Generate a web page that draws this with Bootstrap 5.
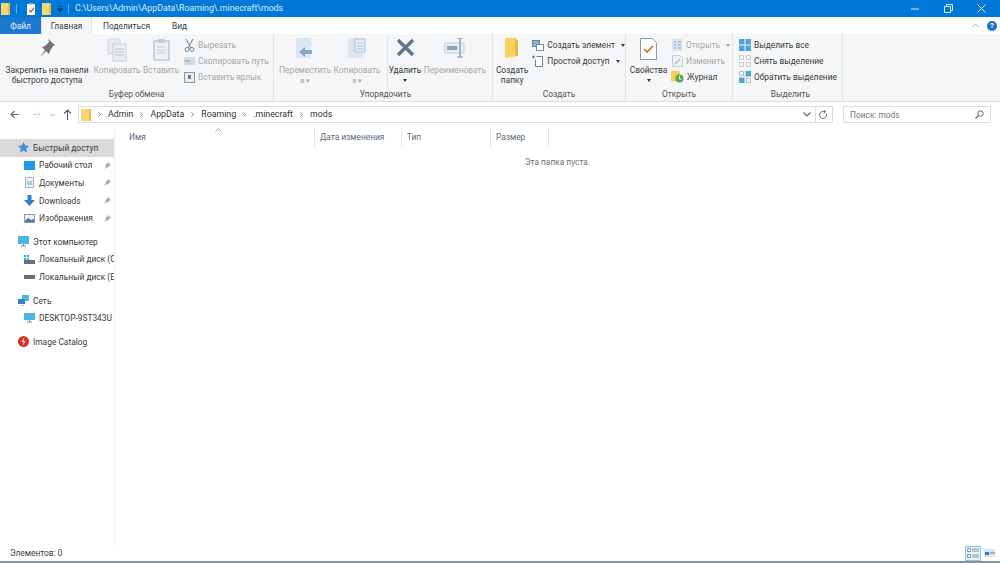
<!DOCTYPE html>
<html lang="ru">
<head>
<meta charset="UTF-8">
<title>mods</title>
<link href="https://cdn.jsdelivr.net/npm/bootstrap@5.3.3/dist/css/bootstrap.min.css" rel="stylesheet">
<style>
html,body{height:563px;overflow:hidden}
body{font-family:Roboto,"Open Sans","Liberation Sans",sans-serif;font-size:8.35px;color:#3a3a3a;background:#fff;line-height:1.2}
svg{display:block;flex:none}
.fe-app{height:563px}
.title-bar{height:17px;background:#0078d7;color:#dcecf9;font-size:8.8px;padding-left:1px}
.title-bar .path-txt{margin-left:6px}
.q-sep{width:1px;height:10px;background:#5fa8e3;margin:0 3px 0 6px}
.q-gap{margin-left:6px}
.q-sep2{margin:0 0 0 5px}
.win-btns{margin-left:auto;gap:24px;padding-right:14px}
.tab-row{height:17px;background:#fff}
.tab-file{width:41px;height:17px;background:#1b79cf;color:#e8f2fb}
.tab-item{height:17px;padding:0 11px}
.tab-item.is-on{width:51px;background:#f5f6f7;border-left:1px solid #e3e4e5;border-right:1px solid #e3e4e5;justify-content:center;padding:0}
.help-area{margin-left:auto;gap:8px;padding-right:3px}
.help-dot{width:10px;height:10px;border-radius:50%;background:#1475c9;color:#fff;font-size:8px;font-weight:700;line-height:10px;text-align:center}
.rib{height:68px;background:#f5f6f7;border-bottom:1px solid #dadbdc}
.rib-group{border-right:1px solid #e2e3e4;padding-top:3px}
.rib-body{height:51px}
.rib-cap{height:13px;text-align:center;color:#555;line-height:13px}
.big-btn{text-align:center;line-height:9.5px;white-space:nowrap}
.big-ico{height:26px;margin-top:1px;margin-bottom:2px}
.mut{color:#a6a8aa}
.sm-btn{height:16px;gap:3px;white-space:nowrap}
.caret-d{display:inline-block;border-left:2.5px solid transparent;border-right:2.5px solid transparent;border-top:3px solid currentColor;vertical-align:middle;margin-left:3px}
.caret-c{margin:0;color:#333}
.dark-txt{color:#333}
.in-txt{font-size:7px}
.gr-clip{width:274px}
.gr-org{width:219px;padding-left:5px}
.gr-new{width:133px}
.gr-open{width:107px}
.gr-sel{width:110px;padding-left:6px}
.b-pin{width:92px;padding-left:2px}
.b-copy{width:50px}
.b-paste{width:38px}
.b-move{width:52px}
.b-del{width:35px;margin-left:4px;border-left:1px solid #e2e3e4}
.b-ren{width:66px}
.b-folder{width:40px}
.b-prop{width:45px}
.s-new{margin-left:1px}
.s-open{margin-left:1px}
.j-ico{margin-left:-1px}
.addr-row{height:25px;background:#fff;padding-top:4px}
.addr-nav{width:78px;height:17px;padding-left:10px}
.nav-fwd{margin-left:13px}
.nav-drop{margin-left:9px}
.nav-up{margin-left:8px}
.addr-box{width:755px;height:17px;border:1px solid #dcdcdc;color:#333;font-size:8.8px;padding-left:2px}
.crumb-sep{margin:0 7px}
.addr-div{width:1px;height:15px;background:#dcdcdc;margin:0 3px 0 4px}
.srch-box{width:148px;height:17px;border:1px solid #dcdcdc;margin-left:10px;color:#777;padding:0 6px}
.main-area{height:418px}
.side-pane{width:116px;border-right:1px solid #f2f2f2;overflow:hidden;white-space:nowrap;padding-top:12px;font-size:8.4px}
.side-row{height:17.6px;padding-left:24px;gap:4px}
.side-row.is-top{padding-left:18px}
.side-row.is-sel{background:#d9d9d9}
.side-row .pin-ico{margin-left:auto;margin-right:3px}
.side-gap{height:6px}
.col-heads{color:#5a6a7c}
.col-h{height:20px;border-right:1px solid #e5e5e5;padding-left:5px}
.c-name{width:200px;padding-left:14px}
.c-date{width:87px}
.c-type{width:89px}
.c-size{width:58px}
.sort-up{height:0;padding-left:100px}
.sort-up svg{position:relative;top:1px}
.empty-msg{color:#6d6d6d;text-align:center;margin-top:10px;width:885px}
.stat-bar{height:16px;padding-left:10px}
.view-btns{margin-left:auto;gap:3px;padding-right:5px}
.view-on{width:16px;height:15px;border:1px solid #7ccbe8;background:#e3f3fa;padding:1px}
.bot-line{height:2px;background:#8a9298}
</style>
</head>
<body>
<div class="fe-app d-flex flex-column">

  <div class="title-bar d-flex align-items-center">
    <svg width="9" height="12" viewBox="0 0 9 12"><rect width="9" height="12" fill="#f7d774"/><rect x="7" width="2" height="12" fill="#e6bb45"/></svg>
    <div class="q-sep"></div>
    <svg class="q-gap" width="10" height="12" viewBox="0 0 10 12"><rect x="1" y="1" width="8" height="11" fill="#fff"/><rect x="3" width="4" height="2" fill="#c9b38a"/><path d="M3 7l2 2 3-4" stroke="#e2552d" fill="none" stroke-width="1.400"/></svg>
    <svg class="q-gap" width="9" height="12" viewBox="0 0 9 12"><rect width="9" height="12" fill="#f7d774"/><rect x="7" width="2" height="12" fill="#e6bb45"/></svg>
    <svg class="q-gap" width="6" height="6" viewBox="0 0 6 6"><path d="M.5 .5h5M0 2.500h6L3 6z" stroke="#1b3a57" fill="#1b3a57" stroke-width=".5"/></svg>
    <div class="q-sep q-sep2"></div>
    <span class="path-txt">C:\Users\Admin\AppData\Roaming\.minecraft\mods</span>
    <div class="win-btns d-flex align-items-center">
      <svg width="9" height="9" viewBox="0 0 9 9"><path d="M0 5h8" stroke="#dcecf9"/></svg>
      <svg width="9" height="9" viewBox="0 0 9 9"><path d="M.5 2.500h6v6h-6zM2.500 2.500v-2h6v6h-2" stroke="#dcecf9" fill="none"/></svg>
      <svg width="9" height="9" viewBox="0 0 9 9"><path d="M.5.500l8 8M8.500.500l-8 8" stroke="#dcecf9"/></svg>
    </div>
  </div>

  <div class="tab-row d-flex align-items-center">
    <div class="tab-file d-flex align-items-center justify-content-center">Файл</div>
    <div class="tab-item is-on d-flex align-items-center">Главная</div>
    <div class="tab-item d-flex align-items-center">Поделиться</div>
    <div class="tab-item d-flex align-items-center">Вид</div>
    <div class="help-area d-flex align-items-center">
      <svg width="7" height="5" viewBox="0 0 7 5"><path d="M.5 4l3-3 3 3" stroke="#a9abad" fill="none"/></svg>
      <div class="help-dot">?</div>
    </div>
  </div>

  <div class="rib d-flex">
    <div class="rib-group gr-clip d-flex flex-column">
      <div class="rib-body d-flex">
        <div class="big-btn b-pin">
          <div class="big-ico d-flex justify-content-center"><svg width="18" height="20" viewBox="0 0 18 20"><path d="M10 1l7 6-2 1-3 5-1 3-3-3-6 6 5-7-3-3 3-1 4-4z" fill="#6f7377"/></svg></div>
          Закрепить на панели<br>быстрого доступа
        </div>
        <div class="big-btn b-copy mut">
          <div class="big-ico d-flex justify-content-center"><svg width="20" height="24" viewBox="0 0 20 24"><rect x="1" y="1" width="12" height="15" fill="#e4eaf0" stroke="#d4dae0"/><rect x="6" y="6" width="13" height="17" fill="#e9eef3" stroke="#c6ced6"/><path d="M8 11h9M8 14h9M8 17h9" stroke="#b9c3cd"/></svg></div>
          Копировать
        </div>
        <div class="big-btn b-paste mut">
          <div class="big-ico d-flex justify-content-center"><svg width="17" height="23" viewBox="0 0 17 23"><rect x="1" y="3" width="15" height="19" fill="#eef1f4" stroke="#a9b3bd"/><rect x="5" y="1" width="7" height="4" fill="#c4ccd4"/><path d="M4 9h9M4 12h9M4 15h9" stroke="#c3cbd3"/></svg></div>
          Вставить
        </div>
        <div class="d-flex flex-column mut ms-1">
          <div class="sm-btn d-flex align-items-center"><svg width="11" height="13" viewBox="0 0 11 13"><path d="M2 0l5 9M9 0l-5 9" stroke="#7e95ab" stroke-width="1.200"/><circle cx="3" cy="10.500" r="2" fill="none" stroke="#6f8397"/><circle cx="8" cy="10.500" r="2" fill="none" stroke="#6f8397"/></svg>Вырезать</div>
          <div class="sm-btn d-flex align-items-center"><svg width="11" height="8" viewBox="0 0 11 8"><rect width="11" height="8" fill="#cfdbe7"/><path d="M1 4h5" stroke="#7f93a8"/></svg>Скопировать путь</div>
          <div class="sm-btn d-flex align-items-center"><svg width="11" height="12" viewBox="0 0 11 12"><rect x=".5" y="1.500" width="10" height="10" fill="#e8edf2" stroke="#8a9aaa"/><path d="M4 4h3v4H4z" fill="#6d8299"/></svg>Вставить ярлык</div>
        </div>
      </div>
      <div class="rib-cap">Буфер обмена</div>
    </div>

    <div class="rib-group gr-org d-flex flex-column">
      <div class="rib-body d-flex">
        <div class="big-btn b-move mut">
          <div class="big-ico d-flex justify-content-center"><svg width="20" height="22" viewBox="0 0 20 22"><path d="M1 0h15v20H1z" fill="#dce6f1"/><path d="M4 14l6-5v3h7v4h-7v3z" fill="#8aa5c3"/></svg></div>
          Переместить<br><span class="in-txt">в ▾</span>
        </div>
        <div class="big-btn b-move mut">
          <div class="big-ico d-flex justify-content-center"><svg width="20" height="22" viewBox="0 0 20 22"><path d="M1 0h15v20H1z" fill="#dce6f1"/><rect x="8" y="1" width="10" height="13" fill="#e7edf4" stroke="#b4c1cf"/><path d="M10 5h6M10 8h6M10 11h6" stroke="#b4c1cf"/></svg></div>
          Копировать<br><span class="in-txt">в ▾</span>
        </div>
        <div class="big-btn b-del">
          <div class="big-ico d-flex justify-content-center"><svg width="19" height="19" viewBox="0 0 19 19"><path d="M2 2l15 15M17 2L2 17" stroke="#5f7592" stroke-width="3.400"/></svg></div>
          <span class="dark-txt">Удалить</span><br><span class="caret-d caret-c"></span>
        </div>
        <div class="big-btn b-ren mut">
          <div class="big-ico d-flex justify-content-center"><svg width="22" height="20" viewBox="0 0 22 20"><rect x="1" y="5" width="19" height="10" fill="#e6edf4" stroke="#c6d1dc"/><rect x="3" y="8" width="10" height="4" fill="#8aa3bd"/><path d="M13 0h6M13 19h6M16 0v19" stroke="#7e8e9e" stroke-width="1.200"/></svg></div>
          Переименовать
        </div>
      </div>
      <div class="rib-cap">Упорядочить</div>
    </div>

    <div class="rib-group gr-new d-flex flex-column">
      <div class="rib-body d-flex">
        <div class="big-btn b-folder">
          <div class="big-ico d-flex justify-content-center"><svg width="14" height="21" viewBox="0 0 14 21"><path d="M0 0h10l3 3v15l-13 2z" fill="#f9d35f"/><path d="M10 0l3 3v15h-3z" fill="#e5b93c"/></svg></div>
          Создать<br>папку
        </div>
        <div class="s-new d-flex flex-column">
          <div class="sm-btn d-flex align-items-center"><svg width="12" height="11" viewBox="0 0 12 11"><rect x=".5" y=".5" width="7" height="6" fill="#8fb3d3" stroke="#5f86a8"/><rect x="4.500" y="4.500" width="7" height="6" fill="#fff" stroke="#7a8c9c"/></svg>Создать элемент<span class="caret-d"></span></div>
          <div class="sm-btn d-flex align-items-center"><svg width="12" height="12" viewBox="0 0 12 12"><path d="M4.500 1.500h6v10h-7v-7" fill="#fff" stroke="#6f7f8f"/><path d="M0 2h3M1.500.500v3" stroke="#2f7fc4"/></svg>Простой доступ<span class="caret-d"></span></div>
        </div>
      </div>
      <div class="rib-cap">Создать</div>
    </div>

    <div class="rib-group gr-open d-flex flex-column">
      <div class="rib-body d-flex">
        <div class="big-btn b-prop">
          <div class="big-ico d-flex justify-content-center"><svg width="17" height="22" viewBox="0 0 17 22"><path d="M.5.500h12l4 4v17H.500z" fill="#fff" stroke="#8e98a2"/><path d="M4 11l3 3 6-6" stroke="#e0662b" stroke-width="1.700" fill="none"/></svg></div>
          Свойства<br><span class="caret-d caret-c"></span>
        </div>
        <div class="s-open d-flex flex-column">
          <div class="sm-btn d-flex align-items-center mut"><svg width="11" height="12" viewBox="0 0 11 12"><rect width="10" height="12" fill="#dbe5ef"/><path d="M2 3h2M6 3h3M2 6h2M6 6h3M2 9h2M6 9h3" stroke="#8ea3b8"/></svg>Открыть<span class="caret-d"></span></div>
          <div class="sm-btn d-flex align-items-center mut"><svg width="11" height="12" viewBox="0 0 11 12"><path d="M.5.500h7l3 3v8H.500z" fill="#eef2f6" stroke="#c3ced9"/><path d="M3 9l5-5" stroke="#a9bbcc" stroke-width="1.500"/></svg>Изменить</div>
          <div class="sm-btn d-flex align-items-center"><svg class="j-ico" width="13" height="12" viewBox="0 0 13 12"><rect width="9" height="10" fill="#f4ce55"/><circle cx="8.500" cy="7.500" r="4" fill="#5aa64a"/><path d="M8.500 5v3h2" stroke="#fff" fill="none"/></svg>Журнал</div>
        </div>
      </div>
      <div class="rib-cap">Открыть</div>
    </div>

    <div class="rib-group gr-sel d-flex flex-column">
      <div class="rib-body d-flex">
        <div class="d-flex flex-column">
          <div class="sm-btn d-flex align-items-center"><svg width="12" height="12" viewBox="0 0 12 12"><path d="M0 0h5.500v5.500H0zM6.500 0H12v5.500H6.500zM0 6.500h5.500V12H0zM6.500 6.500H12V12H6.500z" fill="#4fa3dc"/></svg>Выделить все</div>
          <div class="sm-btn d-flex align-items-center"><svg width="12" height="12" viewBox="0 0 12 12"><path d="M.5.500h4v4h-4zM7.500.500h4v4h-4zM.5 7.500h4v4h-4zM7.500 7.500h4v4h-4z" fill="none" stroke="#c8cdd2"/></svg>Снять выделение</div>
          <div class="sm-btn d-flex align-items-center"><svg width="12" height="12" viewBox="0 0 12 12"><path d="M6.500 0H12v5.500H6.500zM0 6.500h5.500V12H0z" fill="#4fa3dc"/><path d="M.5.500h4v4h-4zM7.500 7.500h4v4h-4z" fill="none" stroke="#b5bcc3"/></svg>Обратить выделение</div>
        </div>
      </div>
      <div class="rib-cap">Выделить</div>
    </div>
  </div>

  <div class="addr-row d-flex">
    <div class="addr-nav d-flex align-items-center">
      <svg width="9" height="9" viewBox="0 0 9 9"><path d="M4.500 1L1 4.500 4.500 8M1 4.500h8" stroke="#667" fill="none" stroke-width="1.100"/></svg>
      <svg class="nav-fwd" width="9" height="9" viewBox="0 0 9 9"><path d="M4.500 1L8 4.500 4.500 8M0 4.500h8" stroke="#d5d8db" fill="none"/></svg>
      <svg class="nav-drop" width="5" height="4" viewBox="0 0 5 4"><path d="M.5 1l2 2 2-2" stroke="#9a9da0" fill="none"/></svg>
      <svg class="nav-up" width="9" height="11" viewBox="0 0 9 11"><path d="M1 4.500L4.500 1 8 4.500M4.500 1v10" stroke="#556" fill="none" stroke-width="1.100"/></svg>
    </div>
    <div class="addr-box d-flex align-items-center">
      <svg width="10" height="12" viewBox="0 0 10 12"><rect width="10" height="12" fill="#f7d774"/><rect x="8" width="2" height="12" fill="#e6bb45"/></svg>
      <svg class="crumb-sep" width="3" height="5" viewBox="0 0 3 5"><path d="M.5.500l2 2-2 2" stroke="#777" fill="none"/></svg>Admin
      <svg class="crumb-sep" width="3" height="5" viewBox="0 0 3 5"><path d="M.5.500l2 2-2 2" stroke="#777" fill="none"/></svg>AppData
      <svg class="crumb-sep" width="3" height="5" viewBox="0 0 3 5"><path d="M.5.500l2 2-2 2" stroke="#777" fill="none"/></svg>Roaming
      <svg class="crumb-sep" width="3" height="5" viewBox="0 0 3 5"><path d="M.5.500l2 2-2 2" stroke="#777" fill="none"/></svg>.minecraft
      <svg class="crumb-sep" width="3" height="5" viewBox="0 0 3 5"><path d="M.5.500l2 2-2 2" stroke="#777" fill="none"/></svg>mods
      <svg class="ms-auto" width="8" height="5" viewBox="0 0 8 5"><path d="M.5.500L4 4 7.500.500" stroke="#666" fill="none" stroke-width="1.200"/></svg>
      <div class="addr-div"></div>
      <svg class="me-1" width="9" height="10" viewBox="0 0 9 10"><path d="M7.500 4a3.500 3.500 0 1 1-1.500-2M5 0l1.500 2L4.500 3.500" stroke="#666" fill="none"/></svg>
    </div>
    <div class="srch-box d-flex align-items-center justify-content-between">Поиск: mods
      <svg width="9" height="9" viewBox="0 0 9 9"><circle cx="5.500" cy="3.500" r="2.700" fill="none" stroke="#666"/><path d="M3.500 5.500L.5 8.500" stroke="#666" stroke-width="1.300"/></svg>
    </div>
  </div>

  <div class="main-area d-flex">
    <div class="side-pane">
      <div class="side-row is-top is-sel d-flex align-items-center"><svg width="11" height="11" viewBox="0 0 11 11"><path d="M5.500 0l1.700 3.600 3.800.5-2.800 2.600.8 3.800-3.500-1.900L2 10.500l.8-3.800L0 4.100l3.800-.5z" fill="#3c8fd8"/></svg>Быстрый доступ</div>
      <div class="side-row d-flex align-items-center"><svg width="11" height="9" viewBox="0 0 11 9"><rect width="11" height="9" fill="#1e9be8"/></svg>Рабочий стол<svg class="pin-ico" width="7" height="7" viewBox="0 0 7 7"><path d="M4 0l3 3-2 1-1 2-1-1-3 2 2-3-1-1 2-1z" fill="#a8abae"/></svg></div>
      <div class="side-row d-flex align-items-center"><svg width="11" height="11" viewBox="0 0 11 11"><path d="M1.500.500h8v10h-8z" fill="#eef2f5" stroke="#a9b2ba"/><path d="M3 5h5M3 7h5" stroke="#6aa6d6"/></svg>Документы<svg class="pin-ico" width="7" height="7" viewBox="0 0 7 7"><path d="M4 0l3 3-2 1-1 2-1-1-3 2 2-3-1-1 2-1z" fill="#a8abae"/></svg></div>
      <div class="side-row d-flex align-items-center"><svg width="11" height="11" viewBox="0 0 11 11"><path d="M3.500 0h4v5H11l-5.500 6L0 5h3.500z" fill="#2b7fd4"/></svg>Downloads<svg class="pin-ico" width="7" height="7" viewBox="0 0 7 7"><path d="M4 0l3 3-2 1-1 2-1-1-3 2 2-3-1-1 2-1z" fill="#a8abae"/></svg></div>
      <div class="side-row d-flex align-items-center"><svg width="11" height="9" viewBox="0 0 11 9"><rect x=".5" y=".5" width="10" height="8" fill="#e6f0f7" stroke="#8e9aa5"/><path d="M1 7l3-3 3 2 3-1v3H1z" fill="#3f78ad"/></svg>Изображения<svg class="pin-ico" width="7" height="7" viewBox="0 0 7 7"><path d="M4 0l3 3-2 1-1 2-1-1-3 2 2-3-1-1 2-1z" fill="#a8abae"/></svg></div>
      <div class="side-gap"></div>
      <div class="side-row is-top d-flex align-items-center"><svg width="11" height="11" viewBox="0 0 11 11"><rect width="11" height="8" fill="#4db4ea"/><path d="M3 10h5M5.500 8v2" stroke="#7e8b96"/></svg>Этот компьютер</div>
      <div class="side-row d-flex align-items-center"><svg width="11" height="9" viewBox="0 0 11 9"><path d="M0 0h2v2H0zM3 0h2v2H3zM0 3h2v2H0zM3 3h2v2H3z" fill="#2ea6e6"/><rect y="5" width="11" height="4" fill="#6a6f74"/></svg>Локальный диск (C</div>
      <div class="side-row d-flex align-items-center"><svg width="11" height="6" viewBox="0 0 11 6"><rect y="1" width="11" height="4" fill="#6a6f74"/></svg>Локальный диск (E</div>
      <div class="side-gap"></div>
      <div class="side-row is-top d-flex align-items-center"><svg width="11" height="11" viewBox="0 0 11 11"><rect x="4" width="7" height="6" fill="#4db4ea"/><rect y="4" width="7" height="5" fill="#2a86cf"/><path d="M3 11h3" stroke="#7e8b96"/></svg>Сеть</div>
      <div class="side-row d-flex align-items-center"><svg width="11" height="10" viewBox="0 0 11 10"><rect width="11" height="7" fill="#4db4ea"/><path d="M3 9h5M5.500 7v2" stroke="#7e8b96"/></svg>DESKTOP-9ST343U</div>
      <div class="side-gap"></div>
      <div class="side-row is-top d-flex align-items-center"><svg width="11" height="11" viewBox="0 0 11 11"><circle cx="5.500" cy="5.500" r="5.500" fill="#d9301f"/><path d="M6.500 1L3.500 6h2l-1 4 3-5h-2z" fill="#fff"/></svg>Image Catalog</div>
    </div>

    <div class="flex-grow-1">
      <div class="sort-up"><svg width="7" height="4" viewBox="0 0 7 4"><path d="M.5 3.500l3-3 3 3" stroke="#a0a3a6" fill="none"/></svg></div>
      <div class="col-heads d-flex">
        <div class="col-h c-name d-flex align-items-center">Имя</div>
        <div class="col-h c-date d-flex align-items-center">Дата изменения</div>
        <div class="col-h c-type d-flex align-items-center">Тип</div>
        <div class="col-h c-size d-flex align-items-center">Размер</div>
      </div>
      <div class="empty-msg">Эта папка пуста.</div>
    </div>
  </div>

  <div class="stat-bar d-flex align-items-center">
    <span>Элементов: 0</span>
    <div class="view-btns d-flex align-items-center">
      <div class="view-on"><svg width="12" height="11" viewBox="0 0 12 11"><path d="M.5.500h3v3h-3zM.5 6.500h3v3h-3zM5 1h7M5 3h7M5 7h7M5 9h7" stroke="#8a979f" fill="none"/></svg></div>
      <svg width="11" height="8" viewBox="0 0 11 8"><rect width="11" height="8" fill="#d9e6f0"/><rect x="1" y="3" width="4" height="3" fill="#3f78ad"/><path d="M6 4h5" stroke="#6f7f8c"/></svg>
    </div>
  </div>
  <div class="bot-line"></div>
</div>
<script src="https://cdn.jsdelivr.net/npm/bootstrap@5.3.3/dist/js/bootstrap.bundle.min.js"></script>
</body>
</html>
